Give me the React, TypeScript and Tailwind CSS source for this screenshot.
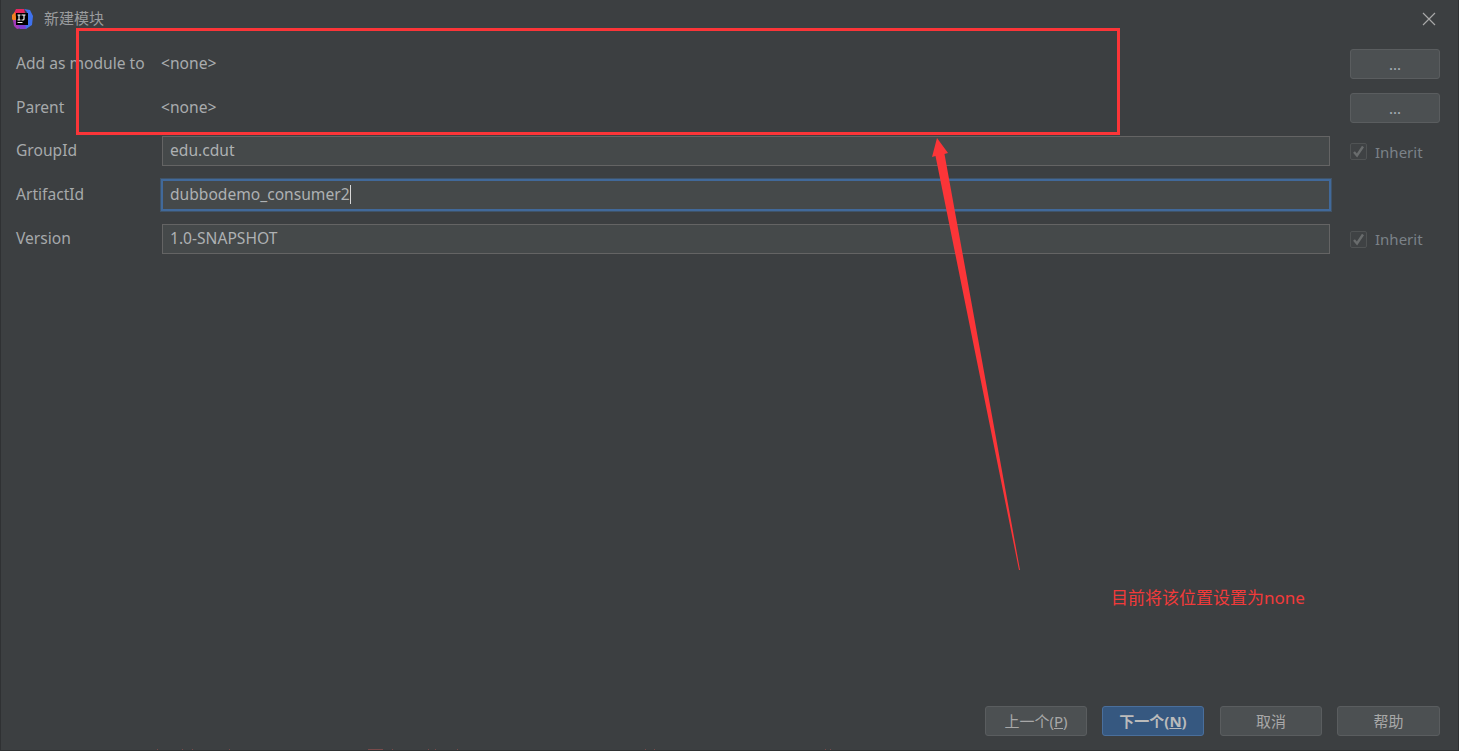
const ui = '"Noto Sans", "Noto Sans CJK SC", sans-serif';

function Logo() {
  return (
    <svg width="21" height="20" viewBox="0 0 21 20" className="shrink-0">
      <path d="M4 0 L12 0 L13 4 L4 6 L2 4 Z" fill="#e6265e" />
      <path d="M0 6 L3 3 L5 13 L2 13 L0 10 Z" fill="#f4801f" />
      <path d="M1 11 L5 11 L10 19 L5 20 L2 17 Z" fill="#a23ab8" />
      <path d="M5 14 L16 14 L14 20 L8 20 Z" fill="#7d3fd0" />
      <path d="M12 0 L18 1 L21 7 L20 16 L14 20 L13 14 L15 3 Z" fill="#3f72ee" />
      <rect x="4" y="4" width="12" height="12" fill="#000" />
      <rect x="5.5" y="13" width="5" height="1" fill="#eee" />
      <path d="M5.5 6h3M7 6v5M5.5 11h3M9.5 6h4M12 6v4q0 1-1 1h-1.5" stroke="#fff" strokeWidth="1.1" fill="none" />
    </svg>
  );
}

function Check() {
  return (
    <span className="w-[17px] h-[17px] rounded-[2px] border border-[#505354] bg-[#3f4244] flex items-center justify-center shrink-0">
      <svg width="13" height="13" viewBox="0 0 13 13">
        <path d="M2 7 L5 10.5 L11 1.5" stroke="#696c6d" strokeWidth="2.4" fill="none" />
      </svg>
    </span>
  );
}

function Inherit({ first }: { first?: boolean }) {
  return (
    <div className={(first ? 'pt-[1px] ' : '') + 'flex items-center gap-2 w-[90px]'}>
      <Check />
      <span className="text-[#7b8288] text-[15px] leading-5">Inherit</span>
    </div>
  );
}

function Btn({ children, primary, wide }: { children: React.ReactNode; primary?: boolean; wide?: boolean }) {
  return (
    <button
      className={
        (wide ? 'w-[103px] ' : 'w-[102px] ') +
        'h-[30px] pt-[1px] rounded-[3px] border flex items-center justify-center text-[15px] leading-none ' +
        (primary
          ? 'border-[#4a6f9c] bg-[#365880] text-[#bbbbbb] font-bold'
          : 'border-[#5a5d5f] bg-[#4c5052] text-[#a8a8a8]')
      }
    >
      {children}
    </button>
  );
}

function Dots() {
  return (
    <button className="w-[90px] h-[30px] rounded-[3px] border border-[#5a5d5f] bg-[#4c5052] text-[#a8b0b8] text-[15px] leading-none flex items-center justify-center">
      ...
    </button>
  );
}

function Field({ value, focused }: { value: string; focused?: boolean }) {
  return (
    <div
      className={
        'flex items-center bg-[#45494a] text-[15.6px] leading-5 pb-[2px] text-[#aeb1b3] ' +
        (focused
          ? 'h-[32px] w-[1170px] -ml-[1px] pl-[7px] border-2 border-[#41699a] shadow-[0_0_0_1px_#3f5368]'
          : 'h-[30px] w-[1168px] pl-[7px] border border-[#646464]')
      }
    >
      {value}
      {focused && <span className="inline-block w-[1px] h-[19px] bg-[#d8d8d8]" />}
    </div>
  );
}

function Label({ children }: { children: React.ReactNode }) {
  return (
    <div className="w-[161px] pl-[15px] pb-[2px] text-[15.6px] leading-5 text-[#a6a9ab] shrink-0 whitespace-nowrap">
      {children}
    </div>
  );
}

function None() {
  return <span className="text-[15.6px] leading-5 pb-[2px] text-[#a9acae] -ml-[1px]">&lt;none&gt;</span>;
}

function Blip({ x, w }: { x: number; w: number }) {
  return <span className="absolute bottom-0 h-[1px] bg-[#7a4a4a]" style={{ left: x, width: w }} />;
}

export default function App() {
  return (
    <div
      className="relative w-[1459px] h-[751px] overflow-hidden bg-[#3c3f41] border-l border-r border-b border-[#2f3133] flex flex-col"
      style={{ fontFamily: ui }}
    >
      <div className="h-[37px] flex items-center pl-[11px] pr-[22px] shrink-0">
        <Logo />
        <span className="ml-[11px] text-[15px] text-[#9a9c9e]">新建模块</span>
        <svg width="14" height="14" viewBox="0 0 14 14" className="ml-auto">
          <path d="M1 1 L13 13 M13 1 L1 13" stroke="#a8a8a8" strokeWidth="1.2" />
        </svg>
      </div>

      <div className="mt-[12px] flex items-center h-[30px] pr-[18px]">
        <Label>Add as module to</Label>
        <None />
        <div className="ml-auto"><Dots /></div>
      </div>
      <div className="mt-[14px] flex items-center h-[30px] pr-[18px]">
        <Label>Parent</Label>
        <None />
        <div className="ml-auto"><Dots /></div>
      </div>
      <div className="mt-[13px] flex items-center h-[30px] pr-[18px]">
        <Label>GroupId</Label>
        <Field value="edu.cdut" />
        <div className="ml-auto"><Inherit first /></div>
      </div>
      <div className="mt-[14px] flex items-center h-[30px] pr-[18px]">
        <Label>ArtifactId</Label>
        <Field value="dubbodemo_consumer2" focused />
      </div>
      <div className="mt-[14px] flex items-center h-[30px] pr-[18px]">
        <Label>Version</Label>
        <Field value="1.0-SNAPSHOT" />
        <div className="ml-auto"><Inherit /></div>
      </div>

      <div className="mt-auto mb-[14px] flex justify-end gap-[15px] pr-[18px]">
        <Btn>上一个(<span className="underline">P</span>)</Btn>
        <div className="mr-[1px]">
          <Btn primary>下一个(<span className="underline">N</span>)</Btn>
        </div>
        <Btn>取消</Btn>
        <Btn wide>帮助</Btn>
      </div>

      {/* annotations */}
      <div className="absolute left-[75px] top-[28px] w-[1044px] h-[107px] border-[3px] border-[#fb3538] pointer-events-none" />
      <svg className="absolute left-[-1px] top-0 pointer-events-none" width="1459" height="751" viewBox="0 0 1459 751">
        <path d="M937 138 L948 153 L944.5 154 L1020 570 L1019 570 L935.5 156 L932 157 Z" fill="#fb3538" />
      </svg>
      <div className="absolute left-[1110px] top-[587px] text-[17px] leading-[22px] text-[#f23a3a] whitespace-nowrap">
        目前将该位置设置为none
      </div>
      <Blip x={156} w={1} />
      <Blip x={181} w={1} />
      <Blip x={191} w={1} />
      <Blip x={228} w={1} />
      <Blip x={367} w={15} />
      <Blip x={391} w={1} />
      <Blip x={427} w={1} />
      <Blip x={434} w={1} />
      <Blip x={456} w={1} />
      <Blip x={644} w={1} />
      <Blip x={653} w={1} />
      <Blip x={824} w={1} />
      <Blip x={829} w={1} />
    </div>
  );
}
